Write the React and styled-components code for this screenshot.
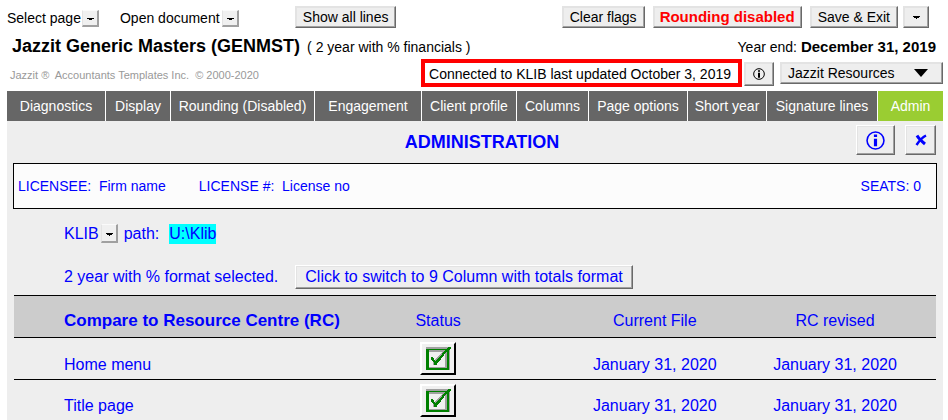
import * as React from 'react';
import styled, { createGlobalStyle, css } from 'styled-components';

const GlobalStyle = createGlobalStyle`
    * {
        box-sizing: border-box;
    }

    body {
        margin: 0;
        background: #fff;
        color: #000;
        font: 14px/16px "Liberation Sans", Arial, sans-serif;
    }
`;

const bevel = css`
    background: #eee;
    border: 1px solid;
    border-color: #e3e3e3 #696969 #696969 #e3e3e3;
    box-shadow: inset -1px -1px 0 #a0a0a0, inset 1px 1px 0 #e3e3e3;
`;

const Page = styled.div`
    padding: 6px 5px 0 7px;
`;

const TopBar = styled.header`
    display: grid;
    grid-template-columns: 288fr 267fr auto;
    height: 22px;
`;

const Group = styled.div`
    display: flex;
    align-items: center;
    gap: ${props => props.$gap || 0}px;
`;

const TopMenus = styled(Group)`
    padding-top: 2px;
    white-space: nowrap;
`;

const TopActions = styled(Group)`
    padding-right: 14px;
`;

const Button = styled.button`
    ${bevel}
    height: 22px;
    padding: 0 ${props => (props.$alert ? 6 : 7)}px;
    color: ${props => (props.$alert ? '#f00' : '#000')};
    font-family: inherit;
    font-size: ${props => (props.$alert ? 15 : 14)}px;
    font-weight: ${props => (props.$alert ? 'bold' : 'normal')};
    line-height: 16px;
    white-space: nowrap;
    display: flex;
    align-items: center;
    justify-content: center;
`;

const MoreButton = styled(Button)`
    width: 26px;
    margin-left: -3px;
`;

const DropButton = styled.button`
    display: flex;
    align-items: center;
    justify-content: center;
    width: 17px;
    height: ${props => props.$height || 17}px;
    padding: 2px 0 0 2px;
    background: #f0f0f0;
    border: solid;
    border-width: 1px 2px 2px 1px;
    border-color: #fafafa #a0a0a0 #a0a0a0 #e3e3e3;
`;

const TitleRow = styled.div`
    display: flex;
    align-items: baseline;
    height: 31px;
    padding: 7px 7px 0 5px;
`;

const Title = styled.h1`
    margin: 0;
    font-size: 18px;
    line-height: 22px;
`;

const Subtitle = styled.span`
    padding-left: 7px;
`;

const YearEnd = styled.div`
    margin-left: auto;

    b {
        font-size: 15px;
    }
`;

const InfoRow = styled.div`
    display: flex;
    height: 32px;
`;

const Copyright = styled.small`
    flex: 1;
    padding: 8px 0 0 3px;
    color: #999;
    font-size: 11px;
    white-space: pre;
`;

const Connected = styled.div`
    height: 28px;
    padding: 2px 7px 2px 4px;
    border: 4px solid #f00;
    line-height: 18px;
`;

const InfoButton = styled(Button)`
    width: 30px;
    height: 24px;
    margin: 3px 6px 0 2px;
    padding: 0;
`;

const ResourcesButton = styled(Button)`
    width: 163px;
    height: 22px;
    margin-top: 3px;
    padding: 0 14px 0 7px;
    justify-content: space-between;
`;

const Tabs = styled.nav`
    display: flex;
    gap: 1px;
`;

const Tab = styled.a`
    flex: ${props => props.$grow} 1 0;
    height: 30px;
    background: ${props => (props.$active ? '#9acd32' : '#666')};
    color: #fff;
    line-height: 30px;
    text-align: center;
    text-decoration: none;
    white-space: nowrap;
`;

const Panel = styled.main`
    padding: 0 6px;
    background: #eee;
    color: #00f;
    font-size: 16px;
    line-height: 20px;
`;

const PanelHead = styled.div`
    display: grid;
    grid-template-columns: 1fr auto 1fr;
    height: 42px;
    padding: 4px 0 0 14px;
`;

const Heading = styled.h2`
    grid-column: 2;
    margin: 6px 0 0;
    font-size: 18px;
    line-height: 22px;
`;

const HeadButtons = styled.div`
    display: flex;
    justify-content: flex-end;
    gap: 10px;
    padding-right: 1px;
`;

const HeadButton = styled(Button)`
    width: ${props => props.$width}px;
    height: 30px;
    padding: 0;
    border-color: #fff #696969 #696969 #fff;
    color: #00f;
`;

const License = styled.section`
    display: flex;
    align-items: center;
    height: 46px;
    padding: 0 15px 0 4px;
    background: #fcfcfc;
    border: 1px solid #000;
    font-size: 14px;
`;

const Field = styled.span`
    padding-right: 33px;
    white-space: pre;
`;

const Seats = styled.span`
    margin-left: auto;
`;

const PathRow = styled.div`
    display: flex;
    align-items: center;
    height: 49px;
    padding-left: 51px;
`;

const KlibLabel = styled.span`
    padding-right: 2px;
`;

const PathLabel = styled.span`
    padding: 0 10px 0 6px;
`;

const PathValue = styled.span`
    background: #0ff;
`;

const FormatRow = styled.div`
    display: flex;
    align-items: center;
    gap: 17px;
    height: 37px;
    padding-left: 51px;
`;

const FormatButton = styled(Button)`
    height: 24px;
    padding: 0 9px;
    border-color: #fff #696969 #696969 #fff;
    color: #00f;
    font-size: 16px;
`;

const TableWrap = styled.div`
    padding: 0 1px;
`;

const Table = styled.table`
    width: 100%;
    border-collapse: collapse;
    table-layout: fixed;
`;

const Col = styled.col`
    width: ${props => props.$width};
`;

const HeadRow = styled.tr`
    height: 42px;
    background: #ccc;
    border-top: 1px solid #000;
    border-bottom: 1px solid #000;
`;

const Row = styled.tr`
    height: 42px;

    & + & {
        height: 41px;
        border-top: 1px solid #000;
    }
`;

const Cell = styled.td`
    padding: 12px 0 0;
    text-align: center;
    white-space: nowrap;

    &:first-child {
        padding-left: 50px;
        text-align: left;
    }

    &:last-child {
        padding-right: 36px;
    }
`;

const HeadCell = styled(Cell)`
    padding-top: 8px;
    font-size: ${props => (props.$bold ? 17 : 16)}px;
    font-weight: ${props => (props.$bold ? 'bold' : 'normal')};
`;

const StatusCell = styled.td`
    padding: 0;
`;

const CheckButton = styled.button`
    display: block;
    width: 36px;
    height: 33px;
    margin: 0 auto;
    padding: 2px 4px;
    background: #f0f0f0;
    border: 2px solid;
    border-color: #fff #000 #000 #fff;

    svg {
        display: block;
        overflow: visible;
    }
`;

const tabs = [
    { label: 'Diagnostics', grow: 98 },
    { label: 'Display', grow: 64 },
    { label: 'Rounding (Disabled)', grow: 143 },
    { label: 'Engagement', grow: 106 },
    { label: 'Client profile', grow: 94 },
    { label: 'Columns', grow: 71 },
    { label: 'Page options', grow: 98 },
    { label: 'Short year', grow: 78 },
    { label: 'Signature lines', grow: 110 },
    { label: 'Admin', grow: 65, active: true }
];

const files = [
    { name: 'Home menu', current: 'January 31, 2020', revised: 'January 31, 2020' },
    { name: 'Title page', current: 'January 31, 2020', revised: 'January 31, 2020' }
];

const DashArrow = () => (
    <svg width="7" height="2" viewBox="0 0 7 2" shapeRendering="crispEdges">
        <path d="M0 0h7v1h-2v1h-3v-1h-2z" />
    </svg>
);

const SmallArrow = () => (
    <svg width="7" height="3" viewBox="0 0 7 3" shapeRendering="crispEdges">
        <path d="M0 0h7v1h-1v1h-2v1h-1v-1h-2v-1h-1z" />
    </svg>
);

const InfoIcon = ({ size }) => (
    <svg width={size} height={size} viewBox="0 0 18 18" fill="none" stroke="currentColor">
        <circle cx="9" cy="9" r="8" strokeWidth="1.5" />
        <path d="M9 7.3v7.2M9 3.2v2.6" strokeWidth="3" />
    </svg>
);

const CrossIcon = () => (
    <svg width="12" height="12" viewBox="0 0 12 12" fill="none" stroke="currentColor">
        <path d="M2 1.5Q4 5 10 10" strokeWidth="3" />
        <path d="M11 1.5Q6 4 1.5 11" strokeWidth="2.4" />
    </svg>
);

const CheckIcon = () => (
    <svg width="24" height="23" viewBox="0 0 24 23" shapeRendering="crispEdges">
        <path d="M0 0h22v2h-22zM3 3h18v2h-18zM19 3h2v18h-2zM22 3h2v20h-2zM3 20h18v1h-18z" fill="#a0a0a0" />
        <path d="M0 2h23v21h-23zM3 3v18h18v-18z" fillRule="evenodd" fill="#008000" />
        <path d="M8 13l11-10v3l-9 12h-3z" fill="#a0a0a0" />
        <path d="M5 10h2l2 4h1l12-14h3v2l-3 1l-11 14v1h-3v-2l-3-3z" fill="#008000" />
    </svg>
);

const App = () => {
    return (
        <React.Fragment>
            <GlobalStyle />
            <Page>
                <TopBar>
                    <TopMenus $gap={21}>
                        <Group $gap={1}>Select page <DropButton aria-label="Select page"><DashArrow /></DropButton></Group>
                        <Group $gap={2}>Open document <DropButton aria-label="Open document"><DashArrow /></DropButton></Group>
                    </TopMenus>
                    <Group>
                        <Button>Show all lines</Button>
                    </Group>
                    <TopActions $gap={8}>
                        <Button>Clear flags</Button>
                        <Button $alert>Rounding disabled</Button>
                        <Button>Save &amp; Exit</Button>
                        <MoreButton aria-label="More exit options"><SmallArrow /></MoreButton>
                    </TopActions>
                </TopBar>
                <TitleRow>
                    <Title>Jazzit Generic Masters (GENMST)</Title>
                    <Subtitle>( 2 year with % financials )</Subtitle>
                    <YearEnd>Year end: <b>December 31, 2019</b></YearEnd>
                </TitleRow>
                <InfoRow>
                    <Copyright>{'Jazzit ®  Accountants Templates Inc.  © 2000-2020'}</Copyright>
                    <Connected>Connected to KLIB last updated October 3, 2019</Connected>
                    <InfoButton aria-label="Connection info"><InfoIcon size={12} /></InfoButton>
                    <ResourcesButton>
                        Jazzit Resources
                        <svg width="14" height="8" viewBox="0 0 14 8"><path d="M0 0h14l-7 8z" /></svg>
                    </ResourcesButton>
                </InfoRow>
                <Tabs>
                    {tabs.map(tab => (
                        <Tab key={tab.label} href="#" $grow={tab.grow} $active={tab.active}>{tab.label}</Tab>
                    ))}
                </Tabs>
                <Panel>
                    <PanelHead>
                        <Heading>ADMINISTRATION</Heading>
                        <HeadButtons>
                            <HeadButton $width={39} aria-label="Info"><InfoIcon size={19} /></HeadButton>
                            <HeadButton $width={31} aria-label="Close"><CrossIcon /></HeadButton>
                        </HeadButtons>
                    </PanelHead>
                    <License>
                        <Field>{'LICENSEE:  Firm name'}</Field>
                        <Field>{'LICENSE #:  License no'}</Field>
                        <Seats>SEATS: 0</Seats>
                    </License>
                    <PathRow>
                        <KlibLabel>KLIB</KlibLabel>
                        <DropButton $height={19} aria-label="KLIB options"><SmallArrow /></DropButton>
                        <PathLabel>path:</PathLabel>
                        <PathValue>U:\Klib</PathValue>
                    </PathRow>
                    <FormatRow>
                        2 year with % format selected.
                        <FormatButton>Click to switch to 9 Column with totals format</FormatButton>
                    </FormatRow>
                    <TableWrap>
                        <Table>
                            <colgroup>
                                <Col $width="35%" />
                                <Col $width="22%" />
                                <Col $width="25%" />
                                <Col $width="18%" />
                            </colgroup>
                            <thead>
                                <HeadRow>
                                    <HeadCell as="th" $bold>Compare to Resource Centre (RC)</HeadCell>
                                    <HeadCell as="th">Status</HeadCell>
                                    <HeadCell as="th">Current File</HeadCell>
                                    <HeadCell as="th">RC revised</HeadCell>
                                </HeadRow>
                            </thead>
                            <tbody>
                                {files.map(file => (
                                    <Row key={file.name}>
                                        <Cell>{file.name}</Cell>
                                        <StatusCell>
                                            <CheckButton aria-label={file.name + ' is up to date'}><CheckIcon /></CheckButton>
                                        </StatusCell>
                                        <Cell>{file.current}</Cell>
                                        <Cell>{file.revised}</Cell>
                                    </Row>
                                ))}
                            </tbody>
                        </Table>
                    </TableWrap>
                </Panel>
            </Page>
        </React.Fragment>
    )
}

export default App;
